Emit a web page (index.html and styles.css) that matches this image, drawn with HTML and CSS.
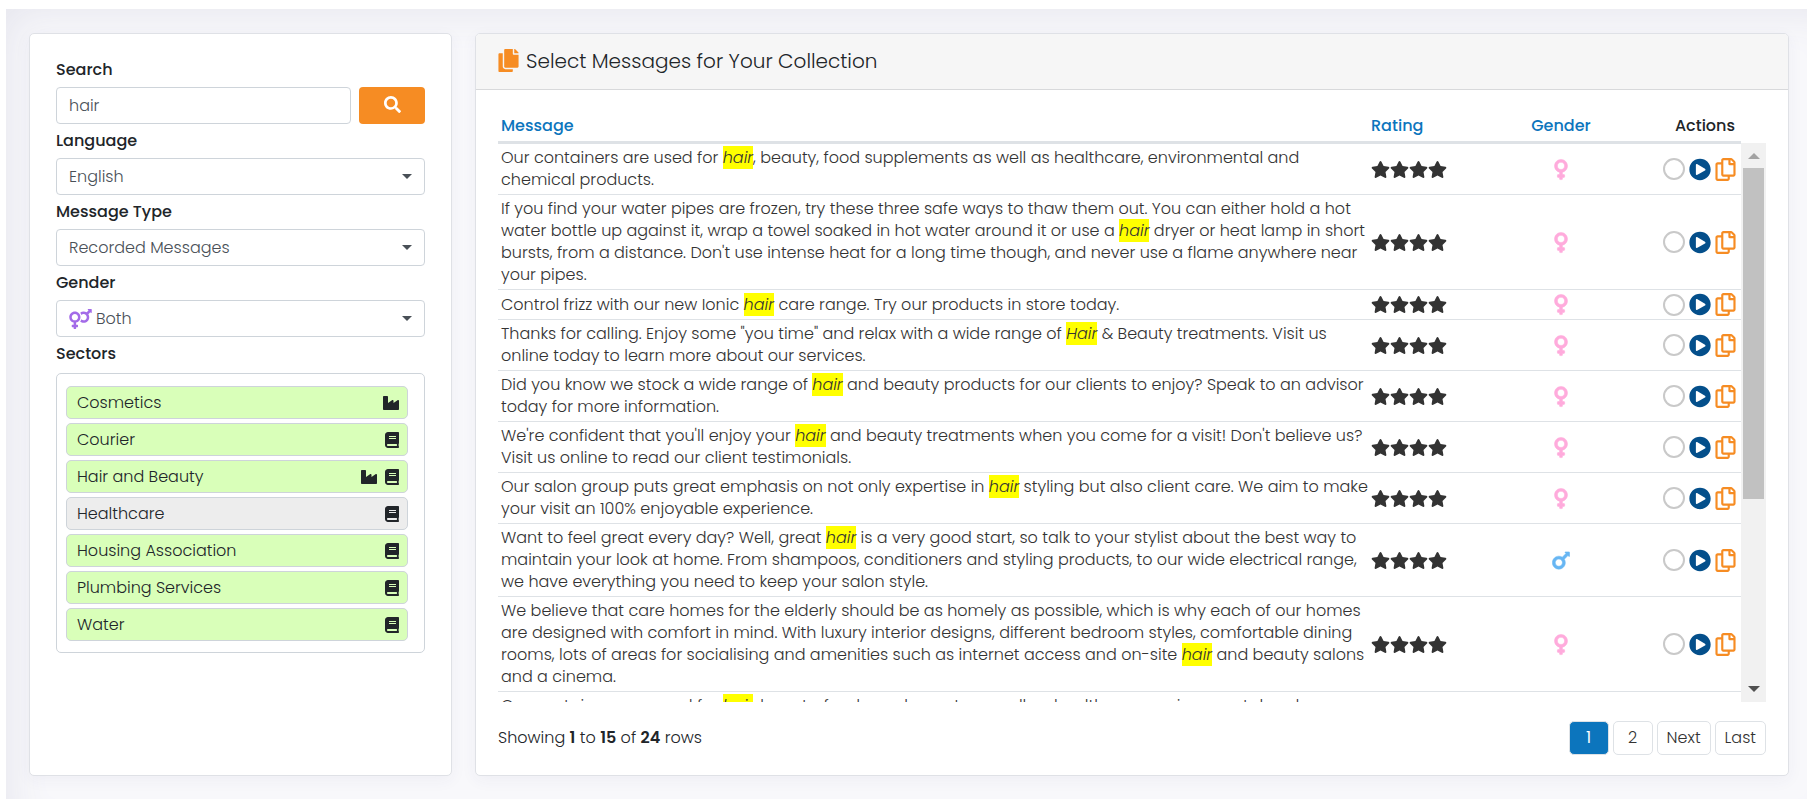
FILE: index.html
```html
<!DOCTYPE html>
<html lang="en">
<head>
<meta charset="utf-8">
<title>Select Messages for Your Collection</title>
<link rel="stylesheet" href="styles.css">
</head>
<body>
<svg class="sprite" aria-hidden="true">
  <symbol id="search" viewBox="0 0 512 512"><path d="M505 442.700L405.300 343c-4.500-4.500-10.600-7-17-7H372c27.600-35.300 44-79.700 44-128C416 93.100 322.900 0 208 0S0 93.100 0 208s93.100 208 208 208c48.300 0 92.700-16.400 128-44v16.300c0 6.400 2.500 12.500 7 17l99.700 99.700c9.400 9.400 24.600 9.400 33.900 0l28.300-28.300c9.400-9.400 9.400-24.600.1-34zM208 336c-70.700 0-128-57.200-128-128 0-70.700 57.200-128 128-128 70.700 0 128 57.200 128 128 0 70.700-57.200 128-128 128z"/></symbol>
  <symbol id="venus" viewBox="0 0 288 512"><path d="M288 176c0-79.500-64.500-144-144-144S0 96.500 0 176c0 68.500 47.900 125.900 112 140.400V368H76c-6.600 0-12 5.400-12 12v40c0 6.600 5.400 12 12 12h36v36c0 6.600 5.400 12 12 12h40c6.600 0 12-5.400 12-12v-36h36c6.600 0 12-5.400 12-12v-40c0-6.600-5.400-12-12-12h-36v-51.600c64.100-14.600 112-71.900 112-140.400zm-224 0c0-44.100 35.900-80 80-80s80 35.900 80 80-35.900 80-80 80-80-35.900-80-80z"/></symbol>
  <symbol id="mars" viewBox="0 0 384 512"><path d="M372 64h-79c-10.700 0-16 12.900-8.500 20.500l16.900 16.900-80.700 80.700C198.500 167.900 172.200 160 144 160 64.500 160 0 224.500 0 304s64.500 144 144 144 144-64.500 144-144c0-28.200-8.100-54.500-22.100-76.700l80.700-80.700 16.900 16.900c7.600 7.600 20.500 2.200 20.500-8.500V76c0-6.600-5.400-12-12-12zM144 384c-44.100 0-80-35.900-80-80s35.900-80 80-80 80 35.900 80 80-35.900 80-80 80z"/></symbol>
  <symbol id="venus-mars" viewBox="0 0 576 512"><path d="M564 0h-79c-10.700 0-16 12.900-8.500 20.500l16.900 16.900-48.700 48.700C422.500 72.100 396.200 64 368 64c-33.700 0-64.600 11.600-89.200 30.900 14 16.700 25 36 32.100 57.100 14.500-14.800 34.700-24 57.100-24 44.100 0 80 35.900 80 80s-35.900 80-80 80c-22.300 0-42.600-9.200-57.100-24-7.100 21.100-18 40.400-32.100 57.100 24.500 19.400 55.500 30.900 89.200 30.900 79.500 0 144-64.500 144-144 0-28.200-8.100-54.500-22.100-76.700l48.700-48.700 16.900 16.900c2.400 2.400 5.400 3.500 8.400 3.500 6.200 0 12.100-4.800 12.100-12V12c0-6.600-5.400-12-12-12zM144 64C64.500 64 0 128.500 0 208c0 68.500 47.900 125.900 112 140.400V400H76c-6.600 0-12 5.400-12 12v40c0 6.600 5.400 12 12 12h36v36c0 6.600 5.400 12 12 12h40c6.600 0 12-5.400 12-12v-36h36c6.600 0 12-5.400 12-12v-40c0-6.600-5.400-12-12-12h-36v-51.600c64.100-14.600 112-71.900 112-140.400 0-79.500-64.500-144-144-144zm0 224c-44.100 0-80-35.900-80-80s35.900-80 80-80 80 35.900 80 80-35.900 80-80 80z"/></symbol>
  <symbol id="star" viewBox="0 0 576 512"><path d="M259.300 17.800L194 150.200 47.900 171.500c-26.200 3.800-36.700 36.100-17.700 54.600l105.700 103-25 145.500c-4.500 26.300 23.200 46 46.400 33.700L288 439.600l130.700 68.700c23.200 12.200 50.900-7.400 46.400-33.700l-25-145.500 105.700-103c19-18.500 8.500-50.800-17.700-54.600L382 150.200 316.700 17.800c-11.700-23.600-45.600-23.900-57.400 0z"/></symbol>
  <symbol id="stars" viewBox="0 0 76 17"><use href="#star" width="19" height="17"/><use href="#star" x="19" width="19" height="17"/><use href="#star" x="38" width="19" height="17"/><use href="#star" x="57" width="19" height="17"/></symbol>
  <symbol id="copy-solid" viewBox="0 0 448 512"><path d="M320 448v40c0 13.255-10.745 24-24 24H24c-13.255 0-24-10.745-24-24V120c0-13.255 10.745-24 24-24h72v296c0 30.879 25.121 56 56 56h168zm0-344V0H152c-13.255 0-24 10.745-24 24v368c0 13.255 10.745 24 24 24h272c13.255 0 24-10.745 24-24V128H344c-13.200 0-24-10.800-24-24zm120.971-31.029L375.029 7.029A24 24 0 0 0 358.059 0H352v96h96v-6.059a24 24 0 0 0-7.029-16.970z"/></symbol>
  <symbol id="copy" viewBox="0 0 448 512"><path d="M433.941 65.941l-51.882-51.882A48 48 0 0 0 348.118 0H176c-26.510 0-48 21.490-48 48v48H48c-26.510 0-48 21.490-48 48v320c0 26.510 21.490 48 48 48h224c26.510 0 48-21.490 48-48v-48h80c26.510 0 48-21.490 48-48V99.882a48 48 0 0 0-14.059-33.941zM266 464H54a6 6 0 0 1-6-6V150a6 6 0 0 1 6-6h74v224c0 26.510 21.490 48 48 48h96v42a6 6 0 0 1-6 6zm128-96H182a6 6 0 0 1-6-6V54a6 6 0 0 1 6-6h106v88c0 13.255 10.745 24 24 24h88v202a6 6 0 0 1-6 6zm6-256h-64V48h9.632c1.591 0 3.117.632 4.243 1.757l48.368 48.368a6 6 0 0 1 1.757 4.243V112z"/></symbol>
  <symbol id="play" viewBox="0 0 512 512"><path d="M256 8C119 8 8 119 8 256s111 248 248 248 248-111 248-248S393 8 256 8zm115.700 272l-176 101c-15.800 8.800-35.700-2.500-35.700-21V152c0-18.400 19.800-29.800 35.700-21l176 107c16.400 9.200 16.400 32.900 0 42z"/></symbol>
  <symbol id="industry" viewBox="0 0 512 512"><path d="M475.115 163.781L336 252.309v-68.280c0-18.916-20.931-30.399-36.885-20.248L160 252.309V56c0-13.255-10.745-24-24-24H24C10.745 32 0 42.745 0 56v400c0 13.255 10.745 24 24 24h464c13.255 0 24-10.745 24-24V184.029c0-18.917-20.931-30.399-36.885-20.248z"/></symbol>
  <symbol id="book" viewBox="0 0 448 512"><path d="M448 360V24c0-13.300-10.700-24-24-24H96C43 0 0 43 0 96v320c0 53 43 96 96 96h328c13.300 0 24-10.700 24-24v-16c0-7.500-3.500-14.300-8.900-18.700-4.200-15.400-4.200-59.300 0-74.700 5.400-4.300 8.900-11.100 8.900-18.600zM128 134c0-3.300 2.700-6 6-6h212c3.300 0 6 2.700 6 6v20c0 3.300-2.700 6-6 6H134c-3.300 0-6-2.700-6-6v-20zm0 64c0-3.300 2.700-6 6-6h212c3.300 0 6 2.700 6 6v20c0 3.300-2.700 6-6 6H134c-3.300 0-6-2.700-6-6v-20zm253.400 250H96c-17.700 0-32-14.300-32-32 0-17.600 14.400-32 32-32h285.400c-1.900 17.100-1.900 46.900 0 64z"/></symbol>
</svg>

<main class="page">
  <aside class="card filters">
    <div class="field">
      <label for="q">Search</label>
      <div class="search-row">
        <input class="control" id="q" type="text" value="hair">
        <button class="search-btn" type="button" aria-label="Search"><svg class="i-search"><use href="#search"/></svg></button>
      </div>
    </div>
    <div class="field">
      <label for="language">Language</label>
      <div class="select"><select class="control" id="language"><option>English</option></select></div>
    </div>
    <div class="field">
      <label for="type">Message Type</label>
      <div class="select"><select class="control" id="type"><option>Recorded Messages</option></select></div>
    </div>
    <div class="field">
      <label for="gender">Gender</label>
      <div class="select with-icon"><svg class="i-both"><use href="#venus-mars"/></svg><select class="control" id="gender"><option>Both</option></select></div>
    </div>
    <h2 class="sectors-title">Sectors</h2>
    <ul class="sectors">
      <li><button class="sector" type="button"><span>Cosmetics</span><svg class="i-industry"><use href="#industry"/></svg></button></li>
      <li><button class="sector" type="button"><span>Courier</span><svg class="i-book"><use href="#book"/></svg></button></li>
      <li><button class="sector" type="button"><span>Hair and Beauty</span><svg class="i-industry"><use href="#industry"/></svg><svg class="i-book"><use href="#book"/></svg></button></li>
      <li><button class="sector off" type="button"><span>Healthcare</span><svg class="i-book"><use href="#book"/></svg></button></li>
      <li><button class="sector" type="button"><span>Housing Association</span><svg class="i-book"><use href="#book"/></svg></button></li>
      <li><button class="sector" type="button"><span>Plumbing Services</span><svg class="i-book"><use href="#book"/></svg></button></li>
      <li><button class="sector" type="button"><span>Water</span><svg class="i-book"><use href="#book"/></svg></button></li>
    </ul>
  </aside>

  <section class="card messages">
    <header class="card-head">
      <svg class="i-title"><use href="#copy-solid"/></svg>
      <h1>Select Messages for Your Collection</h1>
    </header>
    <div class="card-body">
      <div class="list">
        <div class="scroller">
          <table>
            <colgroup><col><col class="c-rating"><col class="c-gender"><col class="c-actions"></colgroup>
            <thead>
              <tr><th><button type="button">Message</button></th><th><button type="button">Rating</button></th><th class="mid"><button type="button">Gender</button></th><th class="end">Actions</th></tr>
            </thead>
            <tbody>
              <tr>
                <td>Our containers are used for <mark>hair</mark>, beauty, food supplements as well as healthcare, environmental and chemical products.</td>
                <td><svg class="i-stars"><use href="#stars"/></svg></td>
                <td><svg class="i-venus"><use href="#venus"/></svg></td>
                <td><div class="actions"><input type="checkbox" aria-label="Select"><button type="button" aria-label="Play"><svg class="i-play"><use href="#play"/></svg></button><button type="button" aria-label="Copy"><svg class="i-copy"><use href="#copy"/></svg></button></div></td>
              </tr>
              <tr>
                <td>If you find your water pipes are frozen, try these three safe ways to thaw them out. You can either hold a hot water bottle up against it, wrap a towel soaked in hot water around it or use a <mark>hair</mark> dryer or heat lamp in short bursts, from a distance. Don't use intense heat for a long time though, and never use a flame anywhere near your pipes.</td>
                <td><svg class="i-stars"><use href="#stars"/></svg></td>
                <td><svg class="i-venus"><use href="#venus"/></svg></td>
                <td><div class="actions"><input type="checkbox" aria-label="Select"><button type="button" aria-label="Play"><svg class="i-play"><use href="#play"/></svg></button><button type="button" aria-label="Copy"><svg class="i-copy"><use href="#copy"/></svg></button></div></td>
              </tr>
              <tr>
                <td>Control frizz with our new Ionic <mark>hair</mark> care range. Try our products in store today.</td>
                <td><svg class="i-stars"><use href="#stars"/></svg></td>
                <td><svg class="i-venus"><use href="#venus"/></svg></td>
                <td><div class="actions"><input type="checkbox" aria-label="Select"><button type="button" aria-label="Play"><svg class="i-play"><use href="#play"/></svg></button><button type="button" aria-label="Copy"><svg class="i-copy"><use href="#copy"/></svg></button></div></td>
              </tr>
              <tr>
                <td>Thanks for calling. Enjoy some "you time" and relax with a wide range of <mark>Hair</mark> &amp; Beauty treatments. Visit us online today to learn more about our services.</td>
                <td><svg class="i-stars"><use href="#stars"/></svg></td>
                <td><svg class="i-venus"><use href="#venus"/></svg></td>
                <td><div class="actions"><input type="checkbox" aria-label="Select"><button type="button" aria-label="Play"><svg class="i-play"><use href="#play"/></svg></button><button type="button" aria-label="Copy"><svg class="i-copy"><use href="#copy"/></svg></button></div></td>
              </tr>
              <tr>
                <td>Did you know we stock a wide range of <mark>hair</mark> and beauty products for our clients to enjoy? Speak to an advisor today for more information.</td>
                <td><svg class="i-stars"><use href="#stars"/></svg></td>
                <td><svg class="i-venus"><use href="#venus"/></svg></td>
                <td><div class="actions"><input type="checkbox" aria-label="Select"><button type="button" aria-label="Play"><svg class="i-play"><use href="#play"/></svg></button><button type="button" aria-label="Copy"><svg class="i-copy"><use href="#copy"/></svg></button></div></td>
              </tr>
              <tr>
                <td>We're confident that you'll enjoy your <mark>hair</mark> and beauty treatments when you come for a visit! Don't believe us? Visit us online to read our client testimonials.</td>
                <td><svg class="i-stars"><use href="#stars"/></svg></td>
                <td><svg class="i-venus"><use href="#venus"/></svg></td>
                <td><div class="actions"><input type="checkbox" aria-label="Select"><button type="button" aria-label="Play"><svg class="i-play"><use href="#play"/></svg></button><button type="button" aria-label="Copy"><svg class="i-copy"><use href="#copy"/></svg></button></div></td>
              </tr>
              <tr>
                <td>Our salon group puts great emphasis on not only expertise in <mark>hair</mark> styling but also client care. We aim to make your visit an 100% enjoyable experience.</td>
                <td><svg class="i-stars"><use href="#stars"/></svg></td>
                <td><svg class="i-venus"><use href="#venus"/></svg></td>
                <td><div class="actions"><input type="checkbox" aria-label="Select"><button type="button" aria-label="Play"><svg class="i-play"><use href="#play"/></svg></button><button type="button" aria-label="Copy"><svg class="i-copy"><use href="#copy"/></svg></button></div></td>
              </tr>
              <tr>
                <td>Want to feel great every day? Well, great <mark>hair</mark> is a very good start, so talk to your stylist about the best way to maintain your look at home. From shampoos, conditioners and styling products, to our wide electrical range, we have everything you need to keep your salon style.</td>
                <td><svg class="i-stars"><use href="#stars"/></svg></td>
                <td><svg class="i-mars"><use href="#mars"/></svg></td>
                <td><div class="actions"><input type="checkbox" aria-label="Select"><button type="button" aria-label="Play"><svg class="i-play"><use href="#play"/></svg></button><button type="button" aria-label="Copy"><svg class="i-copy"><use href="#copy"/></svg></button></div></td>
              </tr>
              <tr>
                <td>We believe that care homes for the elderly should be as homely as possible, which is why each of our homes are designed with comfort in mind. With luxury interior designs, different bedroom styles, comfortable dining rooms, lots of areas for socialising and amenities such as internet access and on-site <mark>hair</mark> and beauty salons and a cinema.</td>
                <td><svg class="i-stars"><use href="#stars"/></svg></td>
                <td><svg class="i-venus"><use href="#venus"/></svg></td>
                <td><div class="actions"><input type="checkbox" aria-label="Select"><button type="button" aria-label="Play"><svg class="i-play"><use href="#play"/></svg></button><button type="button" aria-label="Copy"><svg class="i-copy"><use href="#copy"/></svg></button></div></td>
              </tr>
              <tr>
                <td>Our containers are used for <mark>hair</mark>, beauty, food supplements as well as healthcare, environmental and chemical products.</td>
                <td><svg class="i-stars"><use href="#stars"/></svg></td>
                <td><svg class="i-venus"><use href="#venus"/></svg></td>
                <td><div class="actions"><input type="checkbox" aria-label="Select"><button type="button" aria-label="Play"><svg class="i-play"><use href="#play"/></svg></button><button type="button" aria-label="Copy"><svg class="i-copy"><use href="#copy"/></svg></button></div></td>
              </tr>
            </tbody>
          </table>
        </div>
        <div class="scrollbar" aria-hidden="true">
          <svg class="arrow up" viewBox="0 0 12 6"><path d="M0 6l6-6 6 6z"/></svg>
          <div class="track"><div class="thumb"></div></div>
          <svg class="arrow down" viewBox="0 0 12 6"><path d="M0 0l6 6 6-6z"/></svg>
        </div>
      </div>
      <footer class="foot">
        <p>Showing <b>1</b> to <b>15</b> of <b>24</b> rows</p>
        <nav class="pages" aria-label="Pages">
          <button class="num current" type="button">1</button>
          <button class="num" type="button">2</button>
          <button type="button">Next</button>
          <button type="button">Last</button>
        </nav>
      </footer>
    </div>
  </section>
</main>
</body>
</html>
```
FILE: styles.css
```css
* { box-sizing: border-box; }

body {
  margin: 0;
  padding: 9px 0 0 6px;
  height: 100vh;
  background: #fff;
  color: #212529;
  font: 300 16px/22px Poppins, Inter, "Open Sans", sans-serif;
}

button, input, select { font: inherit; color: inherit; }
button { cursor: pointer; }
svg { display: block; fill: currentColor; flex: none; }
.sprite { position: absolute; width: 0; height: 0; }

.page {
  display: grid;
  grid-template-columns: minmax(0, 423fr) minmax(0, 1314fr);
  gap: 23px;
  height: 100%;
  padding: 24px 18px 23px 23px;
  background: #f8f8fb;
  box-shadow: inset 20px 20px 40px -16px #e6e6ee;
}

.card {
  display: flex;
  flex-direction: column;
  min-height: 0;
  background: #fff;
  border: 1px solid #dfe1e6;
  border-radius: 5px;
  box-shadow: 0 4px 16px rgba(60, 60, 110, 0.05);
}

/* Filters */
.filters { padding: 19px 26px; }
.field { display: flex; flex-direction: column; }
.field label, .sectors-title {
  margin: 0;
  padding: 2px 0 0;
  height: 34px;
  line-height: 30px;
  font-size: 16px;
  font-weight: 500;
}
.control {
  width: 100%;
  height: 37px;
  padding: 0 12px;
  color: #495057;
  background: #fff;
  border: 1px solid #ced4da;
  border-radius: 4px;
}
.search-row { display: flex; gap: 8px; }
.search-row .control { flex: 1; min-width: 0; }
.search-btn {
  display: grid;
  place-items: center;
  width: 66px;
  height: 37px;
  padding: 0 0 2px;
  color: #fff;
  background: #f68c23;
  border: 0;
  border-radius: 4px;
}
.i-search { width: 17px; height: 17px; }
.select { position: relative; }
.select select { appearance: none; }
.select::after {
  content: "";
  position: absolute;
  right: 13px;
  top: 16px;
  border: 5px solid transparent;
  border-top-color: #495057;
  border-bottom: 0;
}
.with-icon select { padding-left: 39px; }
.i-both {
  position: absolute;
  left: 13px;
  top: 9px;
  width: 23px;
  height: 20px;
  color: #a36be8;
}

.sectors-title { height: 36px; }
.sectors {
  display: flex;
  flex-direction: column;
  gap: 4px;
  margin: 0;
  padding: 12px 16px 11px 9px;
  list-style: none;
  border: 1px solid #ced4da;
  border-radius: 5px;
}
.sector {
  display: flex;
  align-items: center;
  gap: 8px;
  width: 100%;
  height: 33px;
  padding: 0 8px 0 10px;
  text-align: left;
  background: #d9ffb9;
  border: 1px solid #ced4da;
  border-radius: 5px;
}
.sector span { flex: 1; }
.sector.off { background: #ededed; }
.i-industry { width: 16px; height: 16px; }
.i-book { width: 14px; height: 16px; }

/* Messages */
.card-head {
  display: flex;
  align-items: center;
  gap: 7px;
  height: 56px;
  padding: 0 22px 2px;
  background: #f6f6f6;
  border-bottom: 1px solid #d8d9db;
  border-radius: 4px 4px 0 0;
}
.card-head h1 { margin: 0; font-size: 20px; font-weight: 300; line-height: 28px; }
.i-title { width: 21px; height: 23px; color: #f68c23; }

.card-body {
  display: flex;
  flex: 1;
  flex-direction: column;
  min-height: 0;
  padding: 20px 22px 20px 22px;
}
.list { display: flex; flex: 1; min-height: 0; }
.scroller { flex: 1; min-width: 0; overflow-y: auto; scrollbar-width: none; }

table { width: 100%; table-layout: fixed; border-spacing: 0; color: #333; }
.c-rating { width: 131px; }
.c-gender { width: 124px; }
.c-actions { width: 118px; }
th {
  position: sticky;
  top: 0;
  height: 34px;
  padding: 3px;
  text-align: left;
  font-weight: 500;
  color: #212529;
  background: #fff;
  border-bottom: 3px solid #dee2e6;
}
th button { padding: 0; color: #0c75bd; background: none; border: 0; font-weight: 500; }
th.mid { text-align: center; }
th.end { text-align: right; padding-right: 6px; }
td { padding: 3px; vertical-align: middle; border-bottom: 1px solid #dee2e6; }
td:first-child { padding-right: 0; }
mark { color: #333; background: #ff0; font-style: italic; }

.i-stars { width: 76px; height: 17px; }
.i-venus { width: 14px; height: 23px; margin: 0 auto; color: #ffabdc; stroke: currentColor; stroke-width: 12px; }
.i-mars { width: 18px; height: 23px; margin: 0 auto; color: #67b6f3; stroke: currentColor; stroke-width: 12px; }
.actions { display: flex; align-items: center; justify-content: flex-end; gap: 4px; padding-right: 2px; }
.actions button { padding: 0; background: none; border: 0; }
.actions input {
  appearance: none;
  width: 22px;
  height: 22px;
  margin: 0;
  border: 2px solid #c9c9c9;
  border-radius: 50%;
}
.i-play { width: 22px; height: 23px; color: #044f8b; }
.i-copy { width: 21px; height: 23px; color: #f68c23; }

.scrollbar {
  display: flex;
  flex-direction: column;
  align-items: center;
  width: 25px;
  margin-top: 33px;
  background: #f1f1f1;
}
.arrow { width: 12px; height: 6px; }
.up { margin: 10px 0 9px; color: #a3a3a3; }
.down { margin: 9px 0 10px; color: #505050; }
.track { flex: 1; width: 21px; }
.thumb { height: 65%; background: #c1c1c1; }

.foot { display: flex; align-items: center; justify-content: space-between; padding-top: 19px; }
.foot p { margin: 0; }
.foot b { font-weight: 600; }
.pages { display: flex; gap: 4px; }
.pages button {
  height: 34px;
  padding: 0 9px;
  color: #333;
  background: #fff;
  border: 1px solid #dee2e6;
  border-radius: 5px;
}
.pages .num { width: 40px; }
.pages .current { color: #fff; background: #0c75bd; font-weight: 400; }
```
